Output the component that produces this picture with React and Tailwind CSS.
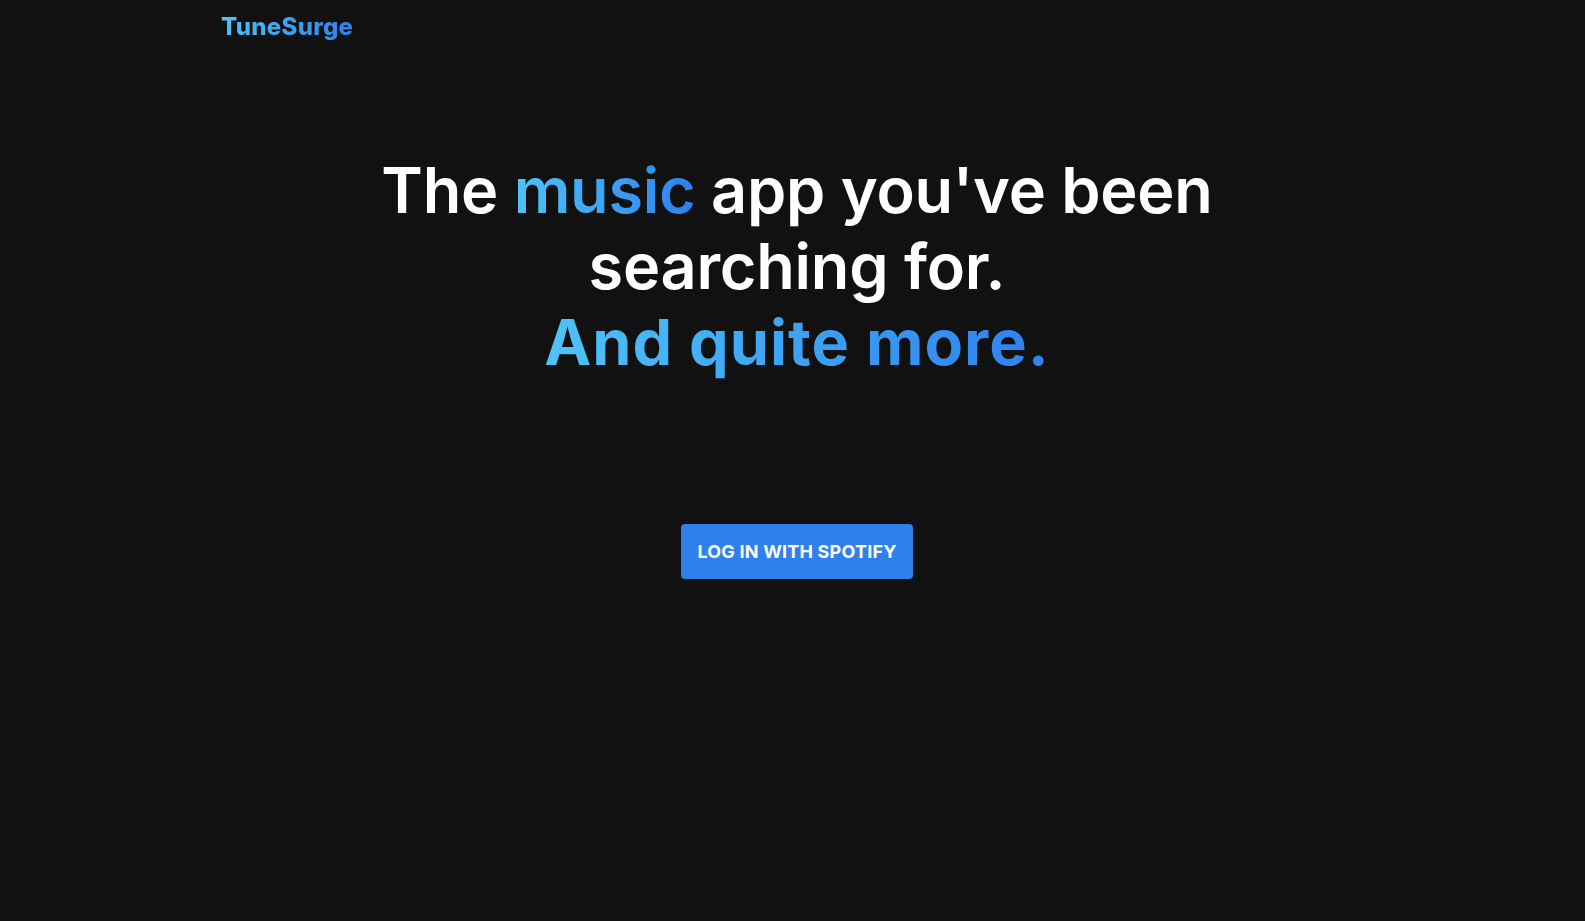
import React from "react";

const gradientText =
  "bg-gradient-to-r from-[#4fc3f7] to-[#2f80ed] bg-clip-text text-transparent";

const App = () => {
  return (
    <div className="min-h-screen bg-[#111111] font-['Inter',sans-serif] text-white">
      {/* Header */}
      <header className="mx-auto w-[1143px] pt-[9px]">
        <span className={`text-[24px] font-extrabold tracking-[0.3px] ${gradientText}`}>TuneSurge</span>
      </header>

      {/* Hero */}
      <main className="flex flex-col items-center pl-[9px] pt-[107px]">
        <h1 className="text-center text-[63px] font-semibold leading-[76px] tracking-[-0.25px]">
          The <span className={gradientText}>music</span> app you've been
          <br />
          searching for.
          <br />
          <span className={`font-bold tracking-[1px] ${gradientText}`}>And quite more.</span>
        </h1>

        <button className="mt-[144px] h-[55px] w-[232px] rounded-[4px] bg-[#2f80ed] text-[18px] font-bold uppercase tracking-[0.2px] text-white">
          Log in with Spotify
        </button>
      </main>
    </div>
  );
};

export default App;
